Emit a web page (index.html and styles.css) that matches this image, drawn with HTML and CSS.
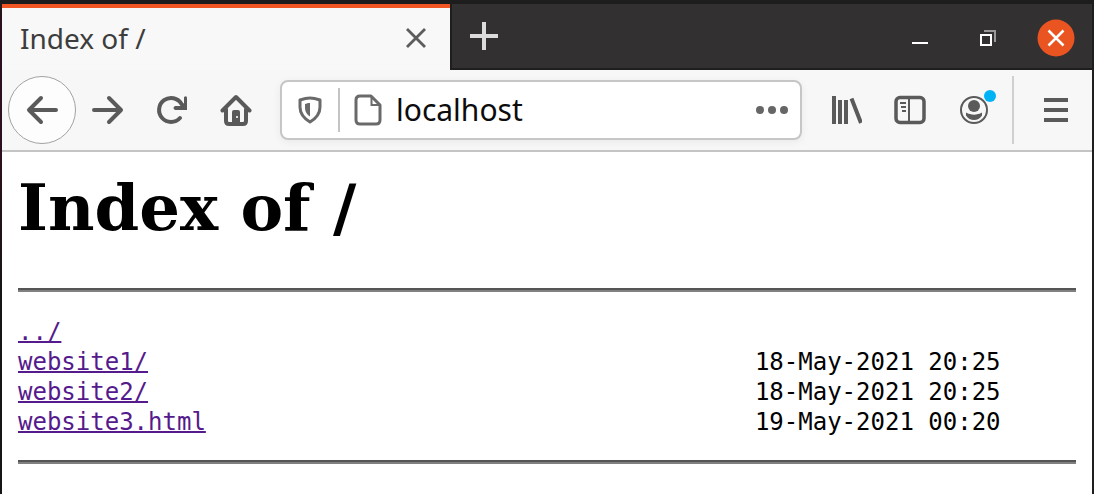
FILE: index.html
```html
<!DOCTYPE html>
<html lang="en">
<head>
<meta charset="utf-8">
<title>Index of /</title>
<link rel="stylesheet" href="styles.css">
</head>
<body>
<div class="window">
  <header class="tabstrip">
    <div class="tab">
      <span class="tab-title">Index of /</span>
      <button class="tab-close" type="button" aria-label="Close tab">
        <svg width="20" height="20" viewBox="0 0 20 20"><path d="M1 1l18 18M19 1L1 19" stroke="#5c5c5c" stroke-width="2.800"/></svg>
      </button>
    </div>
    <div class="strip">
      <button class="new-tab" type="button" aria-label="New tab">
        <svg width="28" height="28" viewBox="0 0 28 28"><path d="M14 0v28M0 14h28" stroke="#dcdcdc" stroke-width="4"/></svg>
      </button>
      <div class="controls">
        <button type="button" aria-label="Minimize">
          <svg width="38" height="38" viewBox="0 0 38 38"><path d="M11 24h16" stroke="#fff" stroke-width="2"/></svg>
        </button>
        <button type="button" aria-label="Restore">
          <svg width="38" height="38" viewBox="0 0 38 38" fill="none" stroke-width="2"><path d="M15 12h11v11" stroke="#999"/><path d="M12 16h10v10H12z" stroke="#fff"/></svg>
        </button>
        <button type="button" aria-label="Close window">
          <svg width="38" height="38" viewBox="0 0 38 38"><circle cx="19" cy="19" r="18.500" fill="#e95420"/><path d="M11.500 11.500l15 15M26.500 11.500l-15 15" stroke="#fff" stroke-width="2.500"/></svg>
        </button>
      </div>
    </div>
  </header>

  <nav class="toolbar" aria-label="Navigation">
    <button class="back" type="button" aria-label="Back">
      <svg class="icon" viewBox="0 0 32 32"><path d="M3 16h27M15 4L3 16l12 12" stroke-linecap="round" stroke-linejoin="round"/></svg>
    </button>
    <button class="tool" type="button" aria-label="Forward">
      <svg class="icon" viewBox="0 0 32 32"><path d="M2 16h27M17 4l12 12-12 12" stroke-linecap="round" stroke-linejoin="round"/></svg>
    </button>
    <button class="tool" type="button" aria-label="Reload">
      <svg class="icon" viewBox="0 0 32 32"><path d="M24 24A12 12 0 1 1 25.500 10" stroke-linecap="round"/><path d="M28 3q3-2 3 1v12H19q-3-2 0-4h5l4-3z" fill="#5a5a5a" stroke="none"/></svg>
    </button>
    <button class="tool" type="button" aria-label="Home">
      <svg class="icon" viewBox="0 0 32 32"><path d="M2.500 16.500L16 3l13.500 13.500M6 15v12q0 3 3 3h14q3 0 3-3V15" stroke-linecap="round" stroke-linejoin="round"/><path d="M12 30V18q0-2 2-2h4q2 0 2 2v12z" fill="#5a5a5a" stroke="none"/><path d="M17 22v2" stroke="#ddd" stroke-width="2"/></svg>
    </button>

    <div class="urlbar">
      <button type="button" aria-label="Tracking protection">
        <svg class="icon shield" viewBox="0 0 24 28"><path d="M12 2C8 2 5 3 2 4v7c0 8 5 12 10 15 5-3 10-7 10-15V4c-3-1-6-2-10-2z" stroke-linejoin="round"/><path d="M12 7c-2 0-3.500.5-5 1v4c0 4 2 6.500 5 8.500z" fill="#6a6a6a" stroke="none"/></svg>
      </button>
      <span class="divider"></span>
      <button type="button" aria-label="Site information">
        <svg class="icon page" viewBox="0 0 28 32"><path d="M17 2H6Q2 2 2 6v20q0 4 4 4h16q4 0 4-4V11z" stroke-linejoin="round"/><path d="M17.500 2v9H26" stroke-width="2"/></svg>
      </button>
      <input type="text" value="localhost" aria-label="Address">
      <button type="button" aria-label="Page actions">
        <svg class="icon" viewBox="0 0 32 32"><g fill="#666" stroke="none"><circle cx="4" cy="16" r="4"/><circle cx="16" cy="16" r="4"/><circle cx="28" cy="16" r="4"/></g></svg>
      </button>
    </div>

    <button class="tool" type="button" aria-label="Library">
      <svg class="icon" viewBox="0 0 32 32"><path d="M4 2v28M10 6v24M16 6v24M21.500 4.500L31 29"/></svg>
    </button>
    <button class="tool" type="button" aria-label="Sidebars">
      <svg class="icon" viewBox="0 0 32 32"><rect x="2" y="3.500" width="28" height="25" rx="4" stroke-width="3.500"/><path d="M15 4v24M6 9h6M7 13h5M8 17h4" stroke-width="2"/></svg>
    </button>
    <button class="tool" type="button" aria-label="Account">
      <svg class="icon" viewBox="0 0 32 32"><circle cx="16" cy="16" r="13" stroke-width="2"/><g fill="#5a5a5a" stroke="none"><circle cx="16" cy="12" r="6"/><path d="M8 18.500q3 1.500 4 1.500 4 1.500 8 0 1 0 4-1.500v3q-3 4.500-8 4.500t-8-4.500z"/></g></svg>
      <span class="badge"></span>
    </button>
    <span class="separator"></span>
    <button class="tool" type="button" aria-label="Menu">
      <svg class="icon" viewBox="0 0 32 32"><path d="M4 6h24M4 16h24M4 26h24"/></svg>
    </button>
  </nav>

  <main class="content">
    <h1>Index of /</h1>
    <hr>
<pre><a href="../">../</a>
<a href="website1/">website1/</a>                                          18-May-2021 20:25
<a href="website2/">website2/</a>                                          18-May-2021 20:25
<a href="website3.html">website3.html</a>                                      19-May-2021 00:20
</pre>
    <hr>
  </main>
</div>
</body>
</html>
```
FILE: styles.css
```css
* { box-sizing: border-box; }

body {
  margin: 0;
  background: linear-gradient(#1d1d1d, #2c101d 20px, #2c101d 160px, #151515 300px);
}

button {
  display: flex;
  align-items: center;
  justify-content: center;
  flex: none;
  margin: 0;
  padding: 0;
  border: 0;
  background: none;
}

svg { display: block; }

.window {
  display: flex;
  flex-direction: column;
  min-height: 100vh;
  border-top: 4px solid #1d1d1d;
  margin-left: 2px;
  border-right: 2px solid #1b1f21;
}

.tabstrip {
  display: flex;
  height: 66px;
  background: #333031;
}

.tab {
  display: flex;
  align-items: center;
  justify-content: space-between;
  flex: 0 1 448px;
  padding: 0 24px 2px 18px;
  border-top: 4px solid #f05522;
  background: #f8f8f8;
}

.tab-title {
  font: 28px/36px "Noto Sans", sans-serif;
  color: #3d3d3d;
}

.strip {
  display: flex;
  flex: 1;
  align-items: center;
  justify-content: space-between;
  padding: 0 17px 0 18px;
  border-bottom: 2px solid #1f1e1f;
  border-left: 2px solid #1f1e1f;
}

.controls {
  display: flex;
  gap: 30px;
  padding-top: 4px;
}

.toolbar {
  display: flex;
  align-items: center;
  height: 82px;
  padding: 0 4px 0 6px;
  border-bottom: 2px solid #c4c4c4;
  background: #f7f7f7;
}

.icon {
  width: 32px;
  height: 32px;
  fill: none;
  stroke: #5a5a5a;
  stroke-width: 4;
}

.back {
  width: 68px;
  height: 68px;
  border: 1px solid #a2a2a2;
  border-radius: 50%;
  background: #fdfdfd;
}

.tool {
  position: relative;
  width: 64px;
  height: 64px;
}

.badge {
  position: absolute;
  top: 12px;
  right: 10px;
  width: 12px;
  height: 12px;
  border-radius: 50%;
  background: #00b3f4;
}

.urlbar {
  display: flex;
  align-items: center;
  flex: 1;
  min-width: 0;
  height: 60px;
  margin: 0 12px;
  padding: 0 12px 0 16px;
  border: 2px solid #c6c6c6;
  border-radius: 8px;
  background: #fff;
  box-shadow: 0 2px 8px rgba(0, 0, 0, 0.06);
}

.urlbar .shield { width: 24px; height: 28px; stroke: #6a6a6a; stroke-width: 3; }
.urlbar .page { width: 28px; stroke: #6a6a6a; stroke-width: 3; }

.divider {
  flex: none;
  width: 2px;
  height: 44px;
  margin: 0 14px 0 16px;
  background: #c4c4c4;
}

.urlbar input {
  flex: 1;
  min-width: 0;
  height: 44px;
  margin: 0;
  padding: 0 0 0 14px;
  border: 0;
  outline: 0;
  background: none;
  font: 30px/44px "Noto Sans", sans-serif;
  color: #0c0c0d;
}

.separator {
  width: 2px;
  height: 68px;
  margin: 0 10px 0 6px;
  background: #d0d0d0;
}

.content {
  flex: 1;
  padding: 18px 16px 0;
  background: #fff;
}

h1 {
  margin: 0 0 42px;
  font: bold 64px/76px "DejaVu Serif", serif;
  color: #000;
}

hr {
  height: 4px;
  margin: 0;
  border: 0;
  border-top: 2px solid #555;
  background: #808080;
}

pre {
  margin: 25px 0 23px;
  font: 24px/30px "DejaVu Sans Mono", monospace;
  color: #000;
}

a {
  color: #551a8b;
  text-decoration-thickness: 2px;
}
```
